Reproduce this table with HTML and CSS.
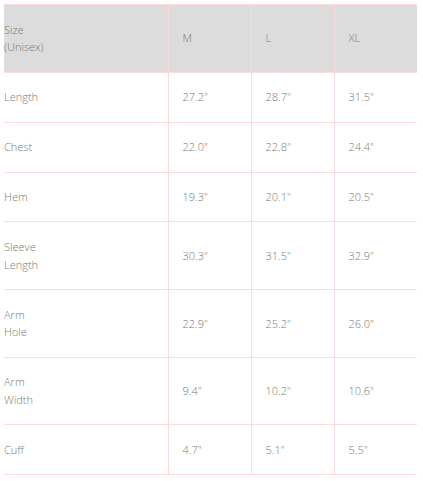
FILE: index.html
```html
<!DOCTYPE html>
<html>
<head>
<meta charset="utf-8">
<link rel="stylesheet" href="styles.css">
</head>
<body>
<table class="size-table">
  <colgroup>
    <col class="c-label"><col class="c-val"><col class="c-val"><col class="c-val">
  </colgroup>
  <thead>
    <tr><th>Size<br>(Unisex)</th><th>M</th><th>L</th><th>XL</th></tr>
  </thead>
  <tbody>
    <tr><td>Length</td><td>27.2"</td><td>28.7"</td><td>31.5"</td></tr>
    <tr><td>Chest</td><td>22.0"</td><td>22.8"</td><td>24.4"</td></tr>
    <tr><td>Hem</td><td>19.3"</td><td>20.1"</td><td>20.5"</td></tr>
    <tr><td>Sleeve<br>Length</td><td>30.3"</td><td>31.5"</td><td>32.9"</td></tr>
    <tr><td>Arm<br>Hole</td><td>22.9"</td><td>25.2"</td><td>26.0"</td></tr>
    <tr><td>Arm<br>Width</td><td>9.4"</td><td>10.2"</td><td>10.6"</td></tr>
    <tr><td>Cuff</td><td>4.7"</td><td>5.1"</td><td>5.5"</td></tr>
  </tbody>
</table>
</body>
</html>
```
FILE: styles.css
```css
html, body { background: #fff; }
body {
  margin: 4px 0 0 4px;
  font-family: "Open Sans", "Liberation Sans", sans-serif;
  font-weight: 300;
  font-size: 11px;
  color: #7a7a7a;
}
.size-table {
  width: 413px;
  border-collapse: collapse;
  table-layout: fixed;
}
.c-label { width: 164px; }
.c-val { width: 83px; }
.size-table th,
.size-table td {
  text-align: left;
  font-weight: 300;
  line-height: 17.6px;
  padding: 15.7px 0 15.7px 14px;
  border-top: 1px solid #fbdcdc;
  border-bottom: 1px solid #fbdcdc;
  border-left: 1px solid #fbdcdc;
  vertical-align: middle;
}
.size-table th:first-child,
.size-table td:first-child {
  padding-left: 0;
  border-left: none;
}
.size-table thead th {
  background: #dcdcdc;
}
```
